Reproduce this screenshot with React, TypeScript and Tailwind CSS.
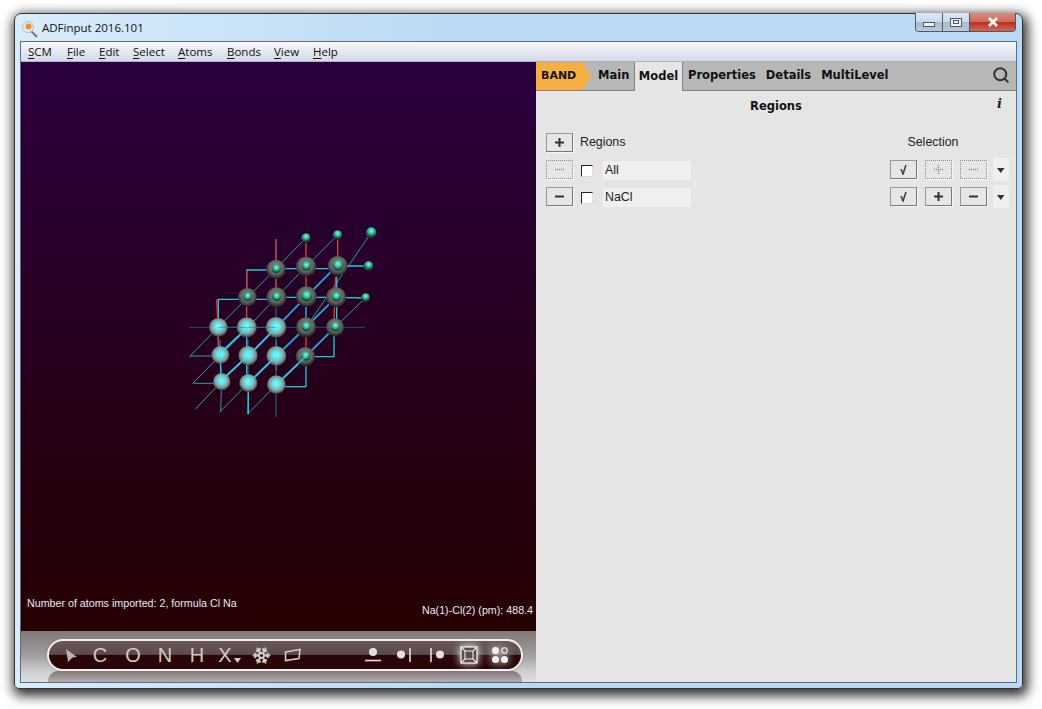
import React from "react";
import { Search, Snowflake } from "lucide-react";

const sans = "font-['Liberation_Sans',Arial,sans-serif]";
const dejavu = "font-['DejaVu_Sans',Verdana,sans-serif]";

function Glyph({ kind }: { kind: string }) {
  const c = "#333";
  if (kind === "plus")
    return (
      <svg width="11" height="11" viewBox="0 0 11 11">
        <path d="M1 5.5h9M5.5 1v9" stroke={c} strokeWidth="2" />
      </svg>
    );
  if (kind === "minus")
    return (
      <svg width="11" height="11" viewBox="0 0 11 11">
        <path d="M1 5.5h9" stroke={c} strokeWidth="2" />
      </svg>
    );
  if (kind === "check")
    return (
      <svg width="11" height="11" viewBox="0 0 11 11">
        <path d="M3 5l2 5 3-9" stroke="#444" strokeWidth="1.6" fill="none" />
      </svg>
    );
  if (kind === "dotplus")
    return (
      <svg width="11" height="11" viewBox="0 0 11 11">
        <path d="M1 5.5h9M5.5 1v9" stroke="#888" strokeWidth="1.5" strokeDasharray="1 1" />
      </svg>
    );
  return (
    <svg width="11" height="11" viewBox="0 0 11 11">
      <path d="M1 5.5h9" stroke="#888" strokeWidth="1.5" strokeDasharray="1 1" />
    </svg>
  );
}

function Btn({ kind, dotted }: { kind: string; dotted?: boolean }) {
  return (
    <div
      className={`w-[27px] h-[19px] flex items-center justify-center bg-[#e6e6e6] shadow-[1px_1px_0_#f6f6f6] ${
        dotted ? "border border-dotted border-[#8a8a8a]" : "border border-[#999] border-b-[#777] border-r-[#777]"
      }`}
    >
      <Glyph kind={kind} />
    </div>
  );
}

function Row({ name, dotted }: { name: string; dotted?: boolean }) {
  return (
    <div className="flex items-center h-[19px] pl-[10px] mt-[8px]">
      <Btn kind={dotted ? "dots" : "minus"} dotted={dotted} />
      <div className="w-[12px] h-[12px] ml-[8px] mt-[2px] bg-white border border-[#222] border-b-[#ddd] border-r-[#ddd]" />
      <div className={`w-[88px] h-[19px] ml-[10px] mt-[2px] pl-[2px] bg-[#efefef] text-[12.4px] leading-[19px] text-[#222] ${sans}`}>{name}</div>
      <div className="ml-[199px]">
        <Btn kind="check" />
      </div>
      <div className="ml-[8px]">
        <Btn kind={dotted ? "dotplus" : "plus"} dotted={dotted} />
      </div>
      <div className="ml-[8px]">
        <Btn kind={dotted ? "dots" : "minus"} dotted={dotted} />
      </div>
      <div className="ml-[6px] w-[16px] h-[23px] bg-[#efefef] flex items-center justify-center">
        <svg width="8" height="6" viewBox="0 0 8 6">
          <path d="M0 1h7.5L3.8 6z" fill="#333" />
        </svg>
      </div>
    </div>
  );
}

const Ball = ({ x, y, r, inner }: { x: number; y: number; r: number; inner?: number }) => (
  <g>
    <circle cx={x} cy={y} r={r} fill={inner ? "url(#dark)" : "url(#light)"} />
    {inner ? <circle cx={x + 1} cy={y - 2} r={inner} fill="url(#green)" /> : null}
  </g>
);

function Molecule() {
  const thin = [
    "M28 410L377 55",
    "M38 490L204 322L289 232L378 140L472 46",
    "M45 568L125 485",
    "M120 575L205 489",
    "M203 582L289 494",
    "M378 322L573 39",
    "M465 322L556 234",
    "M30 408H115",
    "M40 490H125",
    "M122 575L125 485",
    "M203 582L205 489",
  ];
  const thick = [
    "M200 415L289 322L379 230L470 138",
    "M205 489L289 408L378 322L468 232",
    "M289 494L376 410L465 322",
    "M115 405L204 322",
    "M115 490L204 407",
  ];
  const square = [
    "M115 300V238H290",
    "M200 232V150H290",
    "M290 146H470",
    "M290 232H470L556 234",
    "M470 138H565",
    "M378 500H289",
    "M378 410V500",
    "M462 340V410H378",
    "M470 170V300",
    "M378 260V322",
    "M115 322V405",
    "M200 322V489",
    "M205 489L205 582",
    "M120 405L125 485",
  ];
  const red = [
    "M288 58V230",
    "M378 60V228",
    "M473 46V110",
    "M467 170L462 300",
    "M200 150V320",
    "M110 238L113 300",
    "M115 350L118 400",
    "M378 350V400",
  ];
  return (
    <svg width="210" height="200" viewBox="0 0 630 600" className="block">
      <defs>
        <radialGradient id="light" cx="50%" cy="45%" r="55%">
          <stop offset="0" stopColor="#8affff" />
          <stop offset="0.35" stopColor="#62e4e8" />
          <stop offset="0.7" stopColor="#859a9a" />
          <stop offset="1" stopColor="#38383a" />
        </radialGradient>
        <radialGradient id="dark" cx="50%" cy="40%" r="58%">
          <stop offset="0" stopColor="#8a8f8a" />
          <stop offset="0.6" stopColor="#636663" />
          <stop offset="0.85" stopColor="#3c3c3c" />
          <stop offset="1" stopColor="#221f22" />
        </radialGradient>
        <radialGradient id="green" cx="50%" cy="35%" r="60%">
          <stop offset="0" stopColor="#7fffe8" />
          <stop offset="0.55" stopColor="#2fb08c" />
          <stop offset="1" stopColor="#0d3a2c" />
        </radialGradient>
      </defs>
      <path d="M28 322H555" stroke="#0f5a5e" strokeWidth="3" />
      <path d="M288 58V590" stroke="#1a7a80" strokeWidth="3" />
      {thin.map((d) => (
        <path key={d} d={d} stroke="#2fb8c0" strokeWidth="2.5" fill="none" />
      ))}
      {square.map((d) => (
        <path key={d} d={d} stroke="#10d0d8" strokeWidth="4" fill="none" />
      ))}
      {thick.map((d) => (
        <path key={d} d={d} stroke="#1f9ed0" strokeWidth="6" fill="none" />
      ))}
      {red.map((d) => (
        <path key={d} d={d} stroke="#d4404a" strokeWidth="4" fill="none" />
      ))}
      <Ball x={377} y={55} r={14} inner={13} />
      <Ball x={472} y={46} r={14} inner={13} />
      <Ball x={573} y={39} r={16} inner={15} />
      <Ball x={288} y={148} r={29} inner={13} />
      <Ball x={378} y={140} r={30} inner={14} />
      <Ball x={473} y={138} r={30} inner={16} />
      <Ball x={565} y={139} r={15} inner={13} />
      <Ball x={202} y={232} r={28} inner={13} />
      <Ball x={289} y={232} r={30} inner={13} />
      <Ball x={379} y={230} r={31} inner={16} />
      <Ball x={468} y={232} r={30} inner={14} />
      <Ball x={556} y={234} r={13} inner={12} />
      <Ball x={378} y={322} r={30} inner={14} />
      <Ball x={465} y={322} r={27} inner={14} />
      <Ball x={376} y={410} r={29} inner={14} />
      <Ball x={115} y={322} r={28} />
      <Ball x={200} y={322} r={30} />
      <Ball x={288} y={322} r={31} />
      <Ball x={121} y={405} r={27} />
      <Ball x={204} y={407} r={29} />
      <Ball x={289} y={408} r={30} />
      <Ball x={125} y={485} r={26} />
      <Ball x={205} y={489} r={27} />
      <Ball x={289} y={494} r={28} />
      <path d="M115 322H200M200 322H288" stroke="#1a8a90" strokeWidth="2" />
      <path d="M115 405L204 322M204 407L289 322M205 489L289 408M289 494L376 410M115 490L204 407" stroke="#35e8f0" strokeWidth="4" opacity="0.7" />
      <path d="M121 360V470M204 360V470M289 360V450" stroke="#35e8f0" strokeWidth="3" opacity="0.5" />
    </svg>
  );
}

const letter = `text-[#cfcaca] text-[20px] leading-none text-center ${sans}`;

function Toolbar() {
  return (
    <div className="relative h-[51px] pt-[8px] pl-[26px] bg-[linear-gradient(#827878,#a09a9a_45%,#cfcfcf_80%,#dfdfdf)]">
      <div className="absolute left-[27px] right-[14px] bottom-0 h-[11px] rounded-t-[10px] bg-[linear-gradient(#817676,#b3aeae)]" />
      <div className="relative h-[32px] w-[476px] rounded-[16px] border-2 border-[#f2f0f0] flex items-center bg-[linear-gradient(#6a5858_0,#5c4a4a_48%,#2a0506_50%,#2a0506_100%)] shadow-[0_0_2px_#8a8080]">
        <svg width="14" height="15" viewBox="0 0 14 15" className="ml-[16px] shrink-0">
          <path d="M1 1l11 8-4.5 0.5L3 14z" fill="#b8b2b2" />
        </svg>
        <span className={`${letter} w-[16px] ml-[13px]`}>C</span>
        <span className={`${letter} w-[18px] ml-[16px]`}>O</span>
        <span className={`${letter} w-[16px] ml-[15px]`}>N</span>
        <span className={`${letter} w-[16px] ml-[16px]`}>H</span>
        <span className={`${letter} w-[14px] ml-[13px]`}>X</span>
        <svg width="7" height="5" viewBox="0 0 7 5" className="mt-[10px] ml-[2px] shrink-0">
          <path d="M0 0h7L3.5 5z" fill="#cfcaca" />
        </svg>
        <Snowflake size={19} strokeWidth={2.6} color="#cfcaca" className="ml-[11px] shrink-0" />
        <svg width="18" height="14" viewBox="0 0 18 14" className="ml-[13px] shrink-0">
          <path d="M1.5 4L16 1.5l-1 9-13.5 2z" fill="none" stroke="#cfcaca" strokeWidth="1.6" />
        </svg>
        <svg width="16" height="16" viewBox="0 0 16 16" className="ml-[63px] shrink-0">
          <circle cx="8" cy="5" r="4" fill="#e4e0e0" />
          <path d="M0 13.5h16" stroke="#e4e0e0" strokeWidth="1.6" />
        </svg>
        <svg width="16" height="16" viewBox="0 0 16 16" className="ml-[15px] shrink-0">
          <circle cx="5" cy="7.5" r="4" fill="#e4e0e0" />
          <path d="M14 1v14" stroke="#e4e0e0" strokeWidth="1.6" />
        </svg>
        <svg width="16" height="16" viewBox="0 0 16 16" className="ml-[17px] shrink-0">
          <circle cx="11" cy="7.5" r="4" fill="#e4e0e0" />
          <path d="M2 1v14" stroke="#e4e0e0" strokeWidth="1.6" />
        </svg>
        <svg width="18" height="18" viewBox="0 0 18 18" className="ml-[15px] shrink-0 drop-shadow-[0_0_4px_#fff]">
          <rect x="1" y="1" width="16" height="16" fill="#5c4c4c" stroke="#eee" strokeWidth="1.3" />
          <path d="M5 5h8v8H5zM1 1l4 4M17 1l-4 4M1 17l4-4M17 17l-4-4" stroke="#eee" fill="none" strokeWidth="1.1" />
        </svg>
        <svg width="18" height="18" viewBox="0 0 18 18" className="ml-[13px] shrink-0 drop-shadow-[0_0_4px_#fff]">
          <circle cx="4.5" cy="4.5" r="3.5" fill="#f2f0f0" />
          <circle cx="13.5" cy="4.5" r="2.7" fill="none" stroke="#f2f0f0" strokeWidth="1.1" />
          <circle cx="4.5" cy="13.5" r="3.5" fill="#f2f0f0" />
          <circle cx="13.5" cy="13.5" r="3.5" fill="#f2f0f0" />
        </svg>
      </div>
    </div>
  );
}

function MenuItem({ first, rest, w }: { first: string; rest: string; w: string }) {
  return (
    <span className={`${w} shrink-0`}>
      <span className="underline underline-offset-2">{first}</span>
      {rest}
    </span>
  );
}

export default function App() {
  return (
    <div className="w-[1042px] h-[709px] bg-white pt-[13px] pl-[14px] overflow-hidden">
      <div className="w-[1009px] h-[676px] rounded-t-[7px] rounded-b-[5px] border border-[#2f3338] shadow-[2px_4px_12px_3px_rgba(0,0,0,0.8)] flex flex-col bg-[linear-gradient(90deg,#d9ecfb_0,#b9d9f4_45%,#b9d9f4_100%)]">
        <div className="h-[27px] shrink-0 flex items-start">
          <svg width="18" height="18" viewBox="0 0 18 18" className="ml-[6px] mt-[6px] shrink-0">
            <path d="M9 10l7 7" stroke="#777" strokeWidth="2" />
            <circle cx="7" cy="7" r="5.5" fill="#e8e8e8" stroke="#bbb" />
            <circle cx="7.5" cy="6.5" r="3" fill="#f09030" />
          </svg>
          <span className="ml-[3px] mt-[5px] text-[11.5px] leading-[18px] text-[#111] font-['Open_Sans',sans-serif]">ADFinput 2016.101</span>
          <div className="ml-auto mr-[6px] w-[101px] h-[19px] -mt-px flex rounded-b-[4px] border border-t-0 border-[#4a5a6a] overflow-hidden">
            <div className="w-[27px] border-r border-[#4a5a6a] flex items-center justify-center bg-[linear-gradient(#dbe8f3,#c7d9e8_50%,#a9bccd_52%,#b9cad9)]">
              <div className="w-[12px] h-[5px] mt-[5px] bg-[#eef2f6] border border-[#556]" />
            </div>
            <div className="w-[27px] border-r border-[#4a5a6a] flex items-center justify-center bg-[linear-gradient(#dbe8f3,#c7d9e8_50%,#a9bccd_52%,#b9cad9)]">
              <div className="w-[12px] h-[9px] border border-[#556] bg-[#eef2f6] flex items-center justify-center">
                <div className="w-[6px] h-[4px] border border-[#556]" />
              </div>
            </div>
            <div className="flex-1 flex items-center justify-center bg-[linear-gradient(#dc8a78,#cf6a58_50%,#b8301e_52%,#d26a55)]">
              <svg width="12" height="10" viewBox="0 0 12 10">
                <path d="M2 1l8 8M10 1L2 9" stroke="#fff" strokeWidth="2.8" />
              </svg>
            </div>
          </div>
        </div>
        <div className="mx-[5px] h-[642px] border border-[#5d6d7d] flex flex-col bg-[#e5e5e5]">
          <div className="h-[20px] shrink-0 flex items-center pl-[7px] border-b border-[#aab3c8] bg-[linear-gradient(#f8f9fc,#e6e9f2_45%,#d5daea)] text-[11.5px] text-[#111] font-['Open_Sans',sans-serif]">
            <MenuItem first="S" rest="CM" w="w-[39px]" />
            <MenuItem first="F" rest="ile" w="w-[32px]" />
            <MenuItem first="E" rest="dit" w="w-[34px]" />
            <MenuItem first="S" rest="elect" w="w-[45px]" />
            <MenuItem first="A" rest="toms" w="w-[49px]" />
            <MenuItem first="B" rest="onds" w="w-[47px]" />
            <MenuItem first="V" rest="iew" w="w-[39px]" />
            <MenuItem first="H" rest="elp" w="w-[30px]" />
          </div>
          <div className="flex-1 flex min-h-0">
            <div className="w-[515px] shrink-0 flex flex-col">
              <div className="flex-1 flex flex-col bg-[linear-gradient(#2a0040,#260018_60%,#260000)]">
                <div className="ml-[159px] mt-[158px]">
                  <Molecule />
                </div>
                <div className={`mt-auto flex justify-between items-end pl-[6px] pr-[3px] pb-[14px] text-[10.7px] leading-[14px] text-[#e6eaf2] ${sans}`}>
                  <span className="mb-[7px]">Number of atoms imported: 2, formula Cl Na</span>
                  <span>Na(1)-Cl(2) (pm): 488.4</span>
                </div>
              </div>
              <Toolbar />
            </div>
            <div className="flex-1 flex flex-col">
              <div className={`h-[29px] shrink-0 flex items-stretch bg-[#b7b7b7] border-b border-[#808080] text-[11.5px] font-bold text-[#111] ${dejavu}`}>
                <div className="relative z-10 w-[55px] h-[28px] flex items-center pl-[5px] text-[11px] bg-[#f5b041] [clip-path:polygon(0_0,85%_0,100%_50%,85%_100%,0_100%)]">
                  BAND
                </div>
                <div className="-ml-[15px] w-[59px] pl-[22px] flex items-center border-r border-[#808080] shrink-0">Main</div>
                <div className="w-[48px] h-[29px] flex items-center justify-center bg-[#e5e5e5] border-r border-[#808080] shrink-0">Model</div>
                <div className="ml-[5px] flex items-center gap-[10px] h-[28px]">
                  <span>Properties</span>
                  <span>Details</span>
                  <span>MultiLevel</span>
                </div>
                <Search size={18} strokeWidth={2.6} color="#333" className="ml-auto mr-[6px] mt-[4px]" />
              </div>
              <div className="relative h-[31px] flex items-center justify-center">
                <span className={`text-[11.5px] font-bold text-[#111] ${dejavu}`}>Regions</span>
                <span className="absolute right-[14px] top-[3px] text-[13px] font-bold italic text-[#222] font-['DejaVu_Serif',serif]">i</span>
              </div>
              <div className="flex items-center h-[19px] mt-[11px] pl-[10px]">
                <Btn kind="plus" />
                <span className={`ml-[7px] text-[12.4px] text-[#222] ${sans}`}>Regions</span>
                <span className={`ml-[282px] text-[12.4px] text-[#222] ${sans}`}>Selection</span>
              </div>
              <Row name="All" dotted />
              <Row name="NaCl" />
            </div>
          </div>
        </div>
      </div>
    </div>
  );
}
